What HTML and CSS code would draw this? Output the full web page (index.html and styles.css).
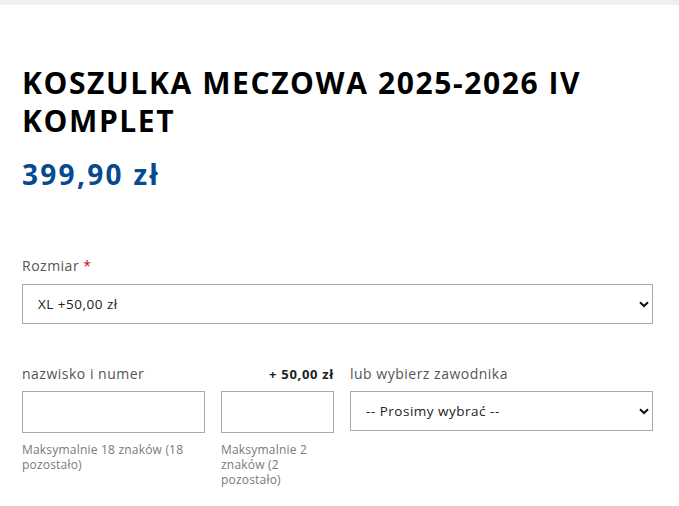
FILE: index.html
```html
<!DOCTYPE html>
<html lang="pl">
<head>
<meta charset="utf-8">
<title>Koszulka meczowa</title>
<link rel="stylesheet" href="styles.css">
</head>
<body>
<div class="topbar"></div>
<main class="product">
  <h1 class="title">KOSZULKA MECZOWA 2025-2026 IV KOMPLET</h1>
  <div class="price">399,90 zł</div>

  <div class="field size-field">
    <label class="label">Rozmiar <span class="req">*</span></label>
    <div class="select">
      <span>XL +50,00 zł</span>
      <svg class="chev" viewBox="0 0 10 7" width="10" height="7"><path d="M1 1.2 L5 5 L9 1.2" fill="none" stroke="#111" stroke-width="2"/></svg>
    </div>
  </div>

  <div class="custom">
    <div class="col">
      <div class="label">nazwisko i numer</div>
      <div class="input"></div>
      <div class="help">Maksymalnie 18 znaków (18 pozostało)</div>
    </div>
    <div class="col">
      <div class="label extra">+ 50,00 zł</div>
      <div class="input"></div>
      <div class="help">Maksymalnie 2 znaków (2 pozostało)</div>
    </div>
    <div class="col">
      <div class="label">lub wybierz zawodnika</div>
      <div class="select">
        <span>-- Prosimy wybrać --</span>
        <svg class="chev" viewBox="0 0 10 7" width="10" height="7"><path d="M1 1.2 L5 5 L9 1.2" fill="none" stroke="#111" stroke-width="2"/></svg>
      </div>
    </div>
  </div>
</main>
</body>
</html>
```

FILE: styles.css
```css
* { box-sizing: border-box; }
body {
  margin: 0;
  background: #fff;
  font-family: "Open Sans", "DejaVu Sans", sans-serif;
  color: #222;
}
.topbar {
  height: 5px;
  background: #efefef;
}
.product {
  padding: 0 26px 0 22px;
}
.title {
  margin: 59px 0 0;
  font-size: 30px;
  line-height: 38px;
  font-weight: 700;
  letter-spacing: 1.6px;
  color: #000;
  max-width: 620px;
}
.price {
  margin-top: 16px;
  font-size: 28px;
  line-height: 36px;
  font-weight: 700;
  letter-spacing: 2.3px;
  color: #064a8f;
}
.size-field {
  margin-top: 64px;
}
.label {
  display: block;
  font-size: 14px;
  line-height: 20px;
  letter-spacing: 0.5px;
  color: #555;
  margin-bottom: 8px;
}
.req { color: #d0021b; }
.select {
  height: 40px;
  border: 1px solid #aaa;
  display: flex;
  align-items: center;
  justify-content: space-between;
  padding: 0 3px 0 15px;
  font-size: 13.5px;
  letter-spacing: 0.5px;
  color: #222;
}
.custom {
  margin-top: 40px;
  display: grid;
  grid-template-columns: 183px 113px 303px;
  column-gap: 16px;
}
.custom .label {
  margin-bottom: 7px;
}
.extra {
  text-align: right;
  font-weight: 700;
  color: #222;
  font-size: 13px;
  letter-spacing: 0.7px;
}
.input {
  height: 42px;
  border: 1px solid #aaa;
}
.help {
  margin-top: 9px;
  font-size: 12px;
  line-height: 15px;
  letter-spacing: 0.2px;
  color: #7a7a7a;
}
```
